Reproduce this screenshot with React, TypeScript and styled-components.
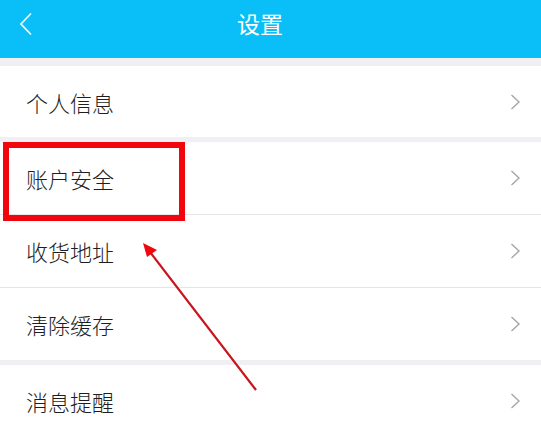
import React from "react";
import styled, { createGlobalStyle } from "styled-components";

const Global = createGlobalStyle`
  html, body { margin: 0; padding: 0; background: #efeff4; }
  body { font-family: "Noto Sans CJK SC", "Noto Sans", sans-serif; }
`;

const Page = styled.div`
  position: relative;
  width: 541px;
  height: 424px;
  overflow: hidden;
  background: #efeff4;
`;

const Header = styled.header`
  height: 58px;
  background: #0abff7;
  display: flex;
  align-items: center;
  position: relative;
`;

const Back = styled.button`
  border: none;
  background: transparent;
  padding: 0;
  margin: -10px 0 0 18px;
  width: 18px;
  height: 24px;
  display: flex;
  cursor: pointer;
`;

const Title = styled.h1`
  position: absolute;
  left: 0;
  right: 21px;
  top: 6px;
  margin: 0;
  text-align: center;
  font-size: 23px;
  font-weight: 400;
  color: #ffffff;
  line-height: 34px;
  pointer-events: none;
`;

const List = styled.div`
  padding-top: 8px;
  display: flex;
  flex-direction: column;
  gap: 5px;
`;

const Group = styled.div`
  background: #fff;
  display: flex;
  flex-direction: column;
`;

const Row = styled.div<{ $h: number }>`
  height: ${(p) => p.$h}px;
  display: flex;
  align-items: center;
  justify-content: space-between;
  padding: 0 20px 0 26px;
  & + & {
    border-top: 1px solid #e6e6e6;
  }
`;

const Label = styled.span`
  font-size: 22px;
  font-weight: 300;
  color: #1e1e1e;
`;

const Chevron = () => (
  <svg width="11" height="16" viewBox="0 0 11 16">
    <path d="M1.5 1 L9 8 L1.5 15" fill="none" stroke="#a6a6a6" strokeWidth="1.4" />
  </svg>
);

const Highlight = styled.div`
  position: absolute;
  left: 3px;
  top: 142px;
  width: 182px;
  height: 79px;
  box-sizing: border-box;
  border: 6px solid #f2060e;
  pointer-events: none;
`;

const Arrow = styled.svg`
  position: absolute;
  left: 0;
  top: 0;
  pointer-events: none;
`;

const groups: { label: string; h: number }[][] = [
  [{ label: "个人信息", h: 71 }],
  [
    { label: "账户安全", h: 72 },
    { label: "收货地址", h: 72 },
    { label: "清除缓存", h: 72 },
  ],
  [{ label: "消息提醒", h: 72 }],
];

export default function App() {
  return (
    <Page>
      <Global />
      <Header>
        <Back aria-label="返回">
          <svg width="18" height="24" viewBox="0 0 18 24">
            <path d="M13 1.5 L3 12 L13 22.5" fill="none" stroke="#eafaff" strokeWidth="1.8" />
          </svg>
        </Back>
        <Title>设置</Title>
      </Header>
      <List>
        {groups.map((g, i) => (
          <Group key={i}>
            {g.map((r) => (
              <Row key={r.label} $h={r.h}>
                <Label>{r.label}</Label>
                <Chevron />
              </Row>
            ))}
          </Group>
        ))}
      </List>
      <Highlight />
      <Arrow width="541" height="424" viewBox="0 0 541 424">
        <line x1="256" y1="390" x2="150" y2="252" stroke="#c8141c" strokeWidth="2.2" />
        <polygon points="143,243 157,250 147,257" fill="#f0060e" />
      </Arrow>
    </Page>
  );
}
